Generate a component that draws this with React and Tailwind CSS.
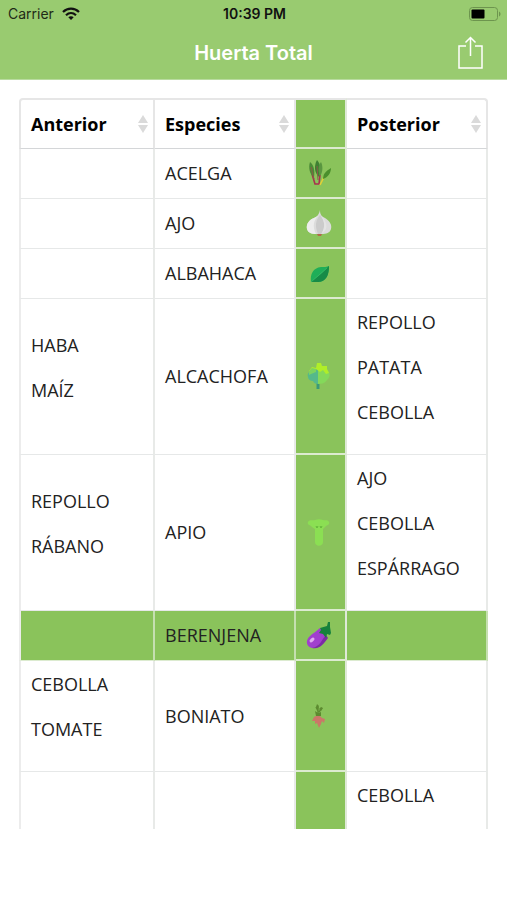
import React from 'react';

const rows = [
  { name: 'ACELGA', icon: ChardIcon, before: [], after: [] },
  { name: 'AJO', icon: GarlicIcon, before: [], after: [] },
  { name: 'ALBAHACA', icon: BasilIcon, before: [], after: [] },
  { name: 'ALCACHOFA', icon: ArtichokeIcon, before: ['HABA', 'MAÍZ'], after: ['REPOLLO', 'PATATA', 'CEBOLLA'] },
  { name: 'APIO', icon: CeleryIcon, before: ['REPOLLO', 'RÁBANO'], after: ['AJO', 'CEBOLLA', 'ESPÁRRAGO'] },
  { name: 'BERENJENA', icon: EggplantIcon, before: [], after: [], selected: true },
  { name: 'BONIATO', icon: SweetPotatoIcon, before: ['CEBOLLA', 'TOMATE'], after: [] },
  { name: '', icon: null, before: [], after: ['CEBOLLA'] },
];

function ChardIcon() {
  return (
    <svg viewBox="0 0 26 26" className="w-[26px] h-[26px]">
      <path d="M6 14l3 10h4l1-9" fill="none" stroke="#a8324f" strokeWidth="1.600" />
      <path d="M14 25l5-10" stroke="#e6cf35" strokeWidth="1.600" />
      <path d="M4 2c4 3 5 9 4 15-4-2-6-9-4-15z" fill="#4b8a36" />
      <path d="M11 0c4 4 4 11 2 17-5-4-5-12-2-17z" fill="#3f8032" />
      <path d="M15 2c2 4 2 10-1 14-2-5-2-10 1-14z" fill="#5a9640" />
      <path d="M25 8c0 5-3 9-8 11 0-5 3-8 8-11z" fill="#4a8f2c" />
      <path d="M5 7l3 12M11 6l1 14" stroke="#8b5a47" strokeWidth="1" fill="none" />
    </svg>
  );
}

function GarlicIcon() {
  return (
    <svg viewBox="0 0 26 26" className="w-[26px] h-[26px]">
      <path d="M14 0c0 4 1 6 5 8 5 3 7 7 6 11-1 4-5 5-9 5h-6c-4 0-8-1-9-5-1-5 2-9 7-11 4-2 5-4 6-8z" fill="#dcdcdc" />
      <path d="M12 6c-4 4-6 10-2 18-4 0-8-1-9-5-1-5 2-9 7-11l4-2z" fill="#ededed" />
      <path d="M14 5c-5 6-5 12-2 19h3c5-7 4-13-1-19z" fill="#cbcbcb" />
      <path d="M15 6c4 6 4 11 1 17 7-3 5-12-1-17z" fill="#e4e4e4" />
      <path d="M11 24h5l-1 2h-3z" fill="#b26a4a" />
    </svg>
  );
}

function BasilIcon() {
  return (
    <svg viewBox="0 0 26 26" className="w-[26px] h-[26px]">
      <path d="M23 6c0 10-4 16-11 16-4 0-5-1-7 0-1-8 2-14 10-15 3 0 6 0 8-1z" fill="#1fae58" />
      <path d="M23 6C18 12 11 17 5 22c6 0 8 0 10-.5C21 20 23 14 23 6z" fill="#178b47" />
      <path d="M5 22L21 8" stroke="#3fba68" strokeWidth=".7" fill="none" />
    </svg>
  );
}

function ArtichokeIcon() {
  return (
    <svg viewBox="0 0 26 28" className="w-[26px] h-7">
      <path d="M12 19v8" stroke="#3a9a78" strokeWidth="3" />
      <path d="M4 9l8-2v15c-3 0-4-1-5-3-3 0-5-2-5-4-1-2 0-4 2-6z" fill="#55b98b" />
      <path d="M12 8h9c4 3 3 8 0 10-2 3-5 4-9 4z" fill="#84d95a" />
      <path d="M3 9l3-4 4 1 1-5h4l1 3 5 0 0 3 2 4-3 1-3-4-3 2-4-3-3 4-3-1z" fill="#b0ee28" />
      <path d="M3 9l3-3 4 1v3l-5 2-2 1z" fill="#7cd35f" />
    </svg>
  );
}

function CeleryIcon() {
  return (
    <svg viewBox="0 0 26 28" className="w-[26px] h-7">
      <path d="M2 4c2-3 5-1 7-2 3-1 5-1 8 0 2 1 4-1 6 2 1 2-1 3-3 4-1 1-2 2-3 3v13c0 5-8 5-8 0V11C7 10 6 9 5 8 3 7 1 6 2 4z" fill="#8bdf53" />
      <path d="M10 8l1 2 1-2M14 8l1 2 1-2" stroke="#63b83a" strokeWidth="1" fill="none" />
    </svg>
  );
}

function EggplantIcon() {
  return (
    <svg viewBox="0 0 26 28" className="w-[26px] h-7">
      <path d="M14 7c-3 3-7 5-11 9-4 5-2 10 3 11 8 1 11-7 15-11z" fill="#a13fce" />
      <path d="M20 14c-4 4-6 12-14 13 8 2 12-5 16-10z" fill="#7c2aa6" />
      <path d="M21 5l1-4 2 0v5l1 6-1 2-3-1-1 4-3-4-4-1 2-3-1-2z" fill="#15813c" />
      <ellipse cx="6" cy="19" rx="3" ry="1.600" transform="rotate(-45 6 19)" fill="#dfabf0" />
    </svg>
  );
}

function SweetPotatoIcon() {
  return (
    <svg viewBox="0 0 26 28" className="w-[26px] h-7">
      <path d="M12 14V5M12 9l-2-4M13 10l3-4" stroke="#5d8b30" strokeWidth="1.400" fill="none" />
      <path d="M11 2l2 2-1 3-2-2zM15 5l2 1-2 3-2-2zM9 9l3 2 3-1 0 4h-5z" fill="#5d8b30" />
      <path d="M10 14h4l2 2 3 1-1 4-2-2-1 3-2 4-2-5-2 1v-3l-3 0 2-4z" fill="#cb7768" />
    </svg>
  );
}

function WifiIcon() {
  return (
    <svg viewBox="0 0 18 13" className="w-[18px] h-[13px]" fill="none" stroke="#111" strokeWidth="2.200">
      <path d="M1 5c4.500-4.500 11.500-4.500 16 0" />
      <path d="M4 8.200c3-2.800 7-2.800 10 0" />
      <path d="M6.300 10.300c1.500-1.400 3.900-1.400 5.400 0L9 13z" fill="#111" stroke="none" />
    </svg>
  );
}

function BatteryIcon() {
  return (
    <svg viewBox="0 0 32 14" className="w-8 h-3.5">
      <rect x=".5" y=".5" width="28" height="13" rx="3" fill="none" stroke="#6d954e" />
      <rect x="2.500" y="2.500" width="13" height="9" rx="1" fill="#000" />
      <path d="M30 4.500c2 .7 2 4.300 0 5z" fill="#6d954e" />
    </svg>
  );
}

function SortIcon() {
  return (
    <svg viewBox="0 0 10 18" className="w-2.5 h-[18px]" fill="#dadada">
      <path d="M5 0l5 8H0z" />
      <path d="M5 18l5-8H0z" />
    </svg>
  );
}

function SortHeader({ label }) {
  return (
    <button className="w-full flex items-center justify-between font-bold">
      {label}
      <SortIcon />
    </button>
  );
}

function PlantList({ items }) {
  return (
    <ul>
      {items.map(item => (
        <li key={item} className="mb-[18px]">{item}</li>
      ))}
    </ul>
  );
}

function PlantRow({ row }) {
  const Icon = row.icon;
  const line = row.selected ? 'border-b-[#dcebd0] border-r-[#c5dfb0]' : 'border-b-[#e6e8e8] border-r-[#e8eae8]';
  const cell = `${line} border-b border-r-2 h-[50px] py-2.5 pl-2.5 align-middle`;

  return (
    <tr className={row.selected ? 'bg-[#8ac35b]' : ''}>
      <td className={`${cell} border-l-2 border-l-[#ececec]`}><PlantList items={row.before} /></td>
      <td className={cell}>{row.name}</td>
      <td className="border-b-2 border-b-[#dcebd0] border-r-2 border-r-[#dfe9d8] bg-[#8ac35b] pl-2.5 align-middle">
        {Icon && <Icon />}
      </td>
      <td className={cell}><PlantList items={row.after} /></td>
    </tr>
  );
}

export default function App() {
  return (
    <div className="h-screen flex flex-col bg-white font-['Open_Sans',sans-serif]">
      <header className="bg-[#99cb70] border-b border-[#b9dba0] font-[Inter,sans-serif]">
        <div className="h-[27px] pl-2 pr-1.5 grid grid-cols-[1fr_auto_1fr] items-center text-sm text-[#111]">
          <div className="flex items-center gap-2 text-[#1f2a17]">
            Carrier
            <WifiIcon />
          </div>
          <div className="font-semibold">10:39 PM</div>
          <div className="flex justify-end"><BatteryIcon /></div>
        </div>
        <div className="h-[52px] px-5 grid grid-cols-[1fr_auto_1fr] items-center">
          <h1 className="col-start-2 text-xl font-semibold text-white">Huerta Total</h1>
          <button aria-label="Compartir" className="justify-self-end">
            <svg viewBox="0 0 34 34" className="w-[34px] h-[34px]" fill="none" stroke="#fff" strokeWidth="1.500">
              <path d="M13 10H6v22h23V10h-7" />
              <path d="M17.500 20V1.500M12.500 6.500l5-5 5 5" />
            </svg>
          </button>
        </div>
      </header>

      <main className="flex-1 overflow-hidden px-[19px] pt-[18px] mb-[71px]">
        <table className="w-full table-fixed border-separate border-spacing-0 text-lg leading-[27px] text-[#222]">
          <thead className="text-left text-black">
            <tr className="h-[51px]">
              <th className="w-[136px] border-t-2 border-x-2 border-[#e6e6e6] border-b border-b-[#d4d6d8] rounded-tl pl-2.5 pr-[5px]">
                <SortHeader label="Anterior" />
              </th>
              <th className="w-[141px] border-t-2 border-r-2 border-[#e6e6e6] border-b border-b-[#d4d6d8] pl-2.5 pr-[5px]">
                <SortHeader label="Especies" />
              </th>
              <th className="w-[51px] border-t-2 border-t-[#e6e6e6] border-r-2 border-r-[#dfe9d8] border-b-2 border-b-[#dcebd0] bg-[#8ac35b]" />
              <th className="border-t-2 border-r-2 border-[#e6e6e6] border-b border-b-[#d4d6d8] rounded-tr pl-2.5 pr-[5px]">
                <SortHeader label="Posterior" />
              </th>
            </tr>
          </thead>
          <tbody>
            {rows.map((row, i) => (
              <PlantRow key={i} row={row} />
            ))}
          </tbody>
        </table>
      </main>
    </div>
  );
}
